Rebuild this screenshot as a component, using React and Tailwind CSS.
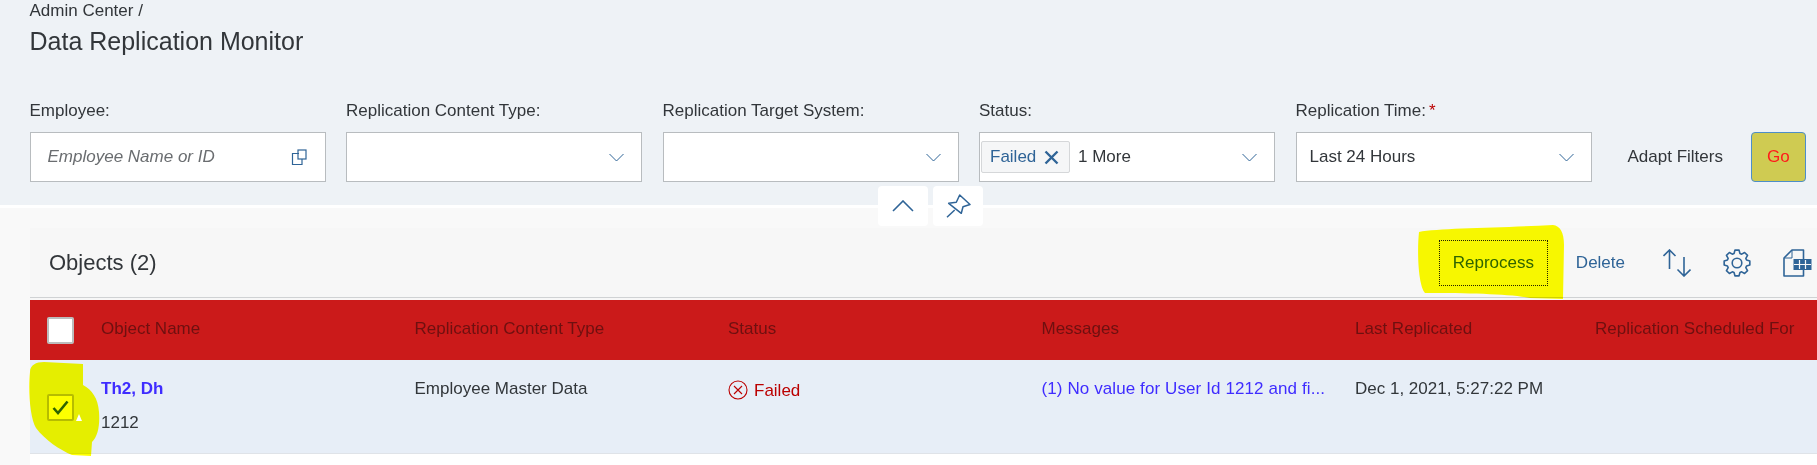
const ValueHelpIcon = () => (
  <svg width="17" height="17" viewBox="0 0 17 17" fill="none" stroke="#2f6497" strokeWidth="1.2">
    <path d="M8 4.5H1.5V15.5H11V10" />
    <rect x="7" y="1" width="8" height="9" />
  </svg>
);

const Chevron = () => (
  <svg width="15" height="9" viewBox="0 0 15 9" fill="none" stroke="#2f6497" strokeWidth="1">
    <path d="M0.5 1L7.5 8L14.5 1" />
  </svg>
);

const PinIcon = () => (
  <svg width="25" height="24" viewBox="0 0 25 24" fill="none" stroke="#2f6497" strokeWidth="1.5" strokeLinejoin="round">
    <path d="M13.7 1L24 10.5L17 12.7L15.3 19.3L2.7 9.3L10.3 8.3Z" />
    <path d="M8.7 16L1 23.3" />
  </svg>
);

const SortIcon = () => (
  <svg width="28" height="28" viewBox="0 0 28 28" fill="none" stroke="#2f6497" strokeWidth="1.6">
    <path d="M6.5 1V20M0.5 7L6.5 1L12.5 7" />
    <path d="M21 8V27M14.5 20.5L21 27L27.5 20.5" />
  </svg>
);

// 8 teeth, outer radius 13, root radius 10
const gearPath = Array.from({ length: 8 }, (_, i) => {
  const a = (i * Math.PI) / 4 - Math.PI / 2;
  const pt = (r, d) => `${(14 + r * Math.cos(a + d)).toFixed(2)} ${(14 + r * Math.sin(a + d)).toFixed(2)}`;
  return `${i === 0 ? 'M' : 'L'}${pt(10, -0.3)} L${pt(13, -0.16)} L${pt(13, 0.16)} L${pt(10, 0.3)}`;
}).join(' ') + ' Z';

const GearIcon = () => (
  <svg width="28" height="28" viewBox="0 0 28 28" fill="none" stroke="#2f6497" strokeWidth="1.6" strokeLinejoin="round">
    <path d={gearPath} />
    <circle cx="14" cy="14" r="4.8" />
  </svg>
);

const ExportIcon = () => (
  <svg width="29" height="28" viewBox="0 0 29 28" fill="none" stroke="#2f6497" strokeWidth="1.6" strokeLinejoin="round">
    <path d="M20.5 10V1H9L1 9V27H20.5V21" />
    <path d="M9 1V9H1" strokeWidth="1" />
    <rect x="10.5" y="10" width="18" height="11" fill="#2f6497" stroke="none" />
    <path d="M16.5 11V20M22.5 11V20M11 15.5H28" stroke="#f7f7f7" strokeWidth="1.2" />
  </svg>
);

const FieldLabel = ({ children }) => (
  <div className="h-[31px] text-[17px] text-[#32363a] leading-[20px]">{children}</div>
);

const FilterField = ({ label, required, children }) => (
  <div className="flex flex-col w-[296px]">
    <FieldLabel>
      {label}
      {required && <span className="ml-[3px] text-[#bb0000]">*</span>}
    </FieldLabel>
    <div className="h-[50px] bg-white border border-[#b8bcbf] flex items-center pl-[13px] pr-[17px] justify-between">
      {children}
    </div>
  </div>
);

const columns = [
  { title: 'Object Name', width: 'w-[313.5px]' },
  { title: 'Replication Content Type', width: 'w-[313.5px]' },
  { title: 'Status', width: 'w-[313.5px]' },
  { title: 'Messages', width: 'w-[313.5px]' },
  { title: 'Last Replicated', width: 'w-[240px]' },
  { title: 'Replication Scheduled For', width: 'w-[220px]' },
];

export default function App() {
  return (
    <div className="relative w-[1817px] h-[465px] overflow-hidden bg-white flex flex-col font-['Liberation_Sans',sans-serif]">
      <div className="h-[205px] shrink-0 bg-[#eef2f6] pl-[29.5px]">
        <div className="h-[26px] pt-[1px] text-[17px] leading-[20px] text-[#32363a]">Admin Center /</div>
        <div className="h-[75px] text-[25px] leading-[30px] text-[#32363a]">Data Replication Monitor</div>
        <div className="flex">
          <div className="flex gap-[20.5px]">
            <FilterField label="Employee:">
              <span className="pl-[4px] text-[17px] italic text-[#6a6d70]">Employee Name or ID</span>
              <ValueHelpIcon />
            </FilterField>
            <FilterField label="Replication Content Type:">
              <span />
              <Chevron />
            </FilterField>
            <FilterField label="Replication Target System:">
              <span />
              <Chevron />
            </FilterField>
            <div className="flex flex-col w-[296px]">
              <FieldLabel>Status:</FieldLabel>
              <div className="h-[50px] bg-white border border-[#b8bcbf] flex items-center pl-[1px] pr-[17px]">
                <div className="h-[32px] w-[89px] bg-[#f5f6f7] border border-[#d5d7d9] rounded-[2px] flex items-center pl-[8px] gap-[8px] text-[17px] text-[#2f6497]">
                  Failed
                  <svg width="15" height="15" viewBox="0 0 15 15" stroke="#2f6497" strokeWidth="2.4" fill="none">
                    <path d="M1.5 1.5L13.5 13.5M13.5 1.5L1.5 13.5" />
                  </svg>
                </div>
                <span className="ml-[8px] text-[17px] text-[#32363a]">1 More</span>
                <span className="ml-auto flex">
                  <Chevron />
                </span>
              </div>
            </div>
            <FilterField label="Replication Time:" required>
              <span className="text-[17px] text-[#32363a]">Last 24 Hours</span>
              <Chevron />
            </FilterField>
          </div>
          <div className="ml-[36px] mt-[31px] h-[50px] flex items-center text-[17px] text-[#32363a]">Adapt Filters</div>
          <div className="ml-[28px] mt-[31px] h-[50px] w-[55px] bg-[#cfcb52] border border-[#4d8ec9] rounded-[4px] flex items-center justify-center text-[17px] text-[#ff1a1a]">Go</div>
        </div>
      </div>

      <div className="h-[3px] shrink-0 bg-white" />
      <div className="h-[20px] shrink-0 bg-[#f9f9f9]" />

      <div className="flex flex-1 min-h-0">
        <div className="w-[30px] shrink-0 bg-[#f9f9f9]" />
        <div className="flex-1 min-w-0">
          <div className="h-[70px] bg-[#f7f7f7] border-b border-[#d0d2d4] flex items-center pl-[19px]">
            <span className="text-[22px] text-[#32363a]">Objects (2)</span>
            <div className="ml-auto flex items-center">
              <div className="w-[109px] h-[46px] border border-dotted border-[#222] flex items-center justify-center text-[17px] text-[#2f6497]">Reprocess</div>
              <span className="ml-[28px] text-[17px] text-[#2f6497]">Delete</span>
              <span className="ml-[38px] flex"><SortIcon /></span>
              <span className="ml-[32px] flex"><GearIcon /></span>
              <span className="ml-[32px] mr-[5px] flex"><ExportIcon /></span>
            </div>
          </div>
          <div className="h-[2px] bg-[#f7f7f7]" />

          <div className="h-[60px] bg-[#cb1a1a] flex text-[17px] text-[#6e1010]">
            <div className="w-[71px] shrink-0 flex items-center pl-[17px]">
              <div className="w-[27px] h-[27px] bg-white border-2 border-[#bcbcbc] rounded-[2px]" />
            </div>
            {columns.map((col) => (
              <div key={col.title} className={`${col.width} shrink-0 pt-[16px] whitespace-nowrap`}>{col.title}</div>
            ))}
          </div>

          <div className="h-[94px] bg-[#e7eef7] border-b border-[#dfe3e8] flex text-[17px] text-[#32363a] leading-[20px]">
            <div className="w-[71px] shrink-0 flex items-center pl-[17px] pt-[1px]">
              <div className="w-[27px] h-[27px] bg-white border-2 border-[#b8bcbf] rounded-[2px] flex items-center justify-center">
                <svg width="17" height="15" viewBox="0 0 17 15" fill="none" stroke="#2f6497" strokeWidth="2.6">
                  <path d="M1.5 8L6 13L15.5 1.5" />
                </svg>
              </div>
            </div>
            <div className="w-[313.5px] shrink-0 pt-[19px]">
              <div className="font-bold text-[#3f2cff]">Th2, Dh</div>
              <div className="mt-[14px]">1212</div>
            </div>
            <div className="w-[313.5px] shrink-0 pt-[19px]">Employee Master Data</div>
            <div className="w-[313.5px] shrink-0 pt-[20px] flex items-start gap-[6px] text-[#bb0000]">
              <svg width="20" height="20" viewBox="0 0 20 20" fill="none" stroke="#bb0000" strokeWidth="1.1">
                <circle cx="10" cy="10" r="9" />
                <path d="M6 6L14 14M14 6L6 14" />
              </svg>
              <span className="mt-[1px]">Failed</span>
            </div>
            <div className="w-[313.5px] shrink-0 pt-[19px] text-[#3f2cff] whitespace-nowrap tracking-[0.1px]">(1) No value for User Id 1212 and fi...</div>
            <div className="w-[240px] shrink-0 pt-[19px] whitespace-nowrap">Dec 1, 2021, 5:27:22 PM</div>
          </div>
        </div>
      </div>

      {/* expand / pin buttons sit across the header edge */}
      <div className="absolute left-[878px] top-[186px] w-[50px] h-[40px] bg-white rounded-[4px] flex items-center justify-center">
        <svg width="22" height="12" viewBox="0 0 22 12" fill="none" stroke="#2f6497" strokeWidth="1.6">
          <path d="M1 11L11 1L21 11" />
        </svg>
      </div>
      <div className="absolute left-[933px] top-[186px] w-[50px] h-[40px] bg-white rounded-[4px] flex items-center justify-center">
        <PinIcon />
      </div>

      {/* highlighter marks drawn over the screenshot */}
      <svg className="absolute left-0 top-0 pointer-events-none mix-blend-multiply" width="1817" height="465">
        <path d="M1419 232 C1440 228 1500 228 1553 225 C1560 226 1564 232 1564 245 L1563 299 L1530 298 C1510 294 1470 293 1425 293 C1418 285 1417 250 1419 232 Z" fill="#ffff00" />
        <path d="M30 372 C30 365 36 362 44 362 L83 364 L83 385 C92 390 98 398 99 412 C100 425 98 436 92 442 L91 456 L72 455 C60 450 45 440 36 428 C30 418 28 390 30 372 Z" fill="#fdff00" />
      </svg>
      <svg className="absolute left-[76px] top-[414px]" width="6" height="7" viewBox="0 0 6 7">
        <path d="M3 0L6 7H0Z" fill="#ffffff" />
      </svg>
    </div>
  );
}
